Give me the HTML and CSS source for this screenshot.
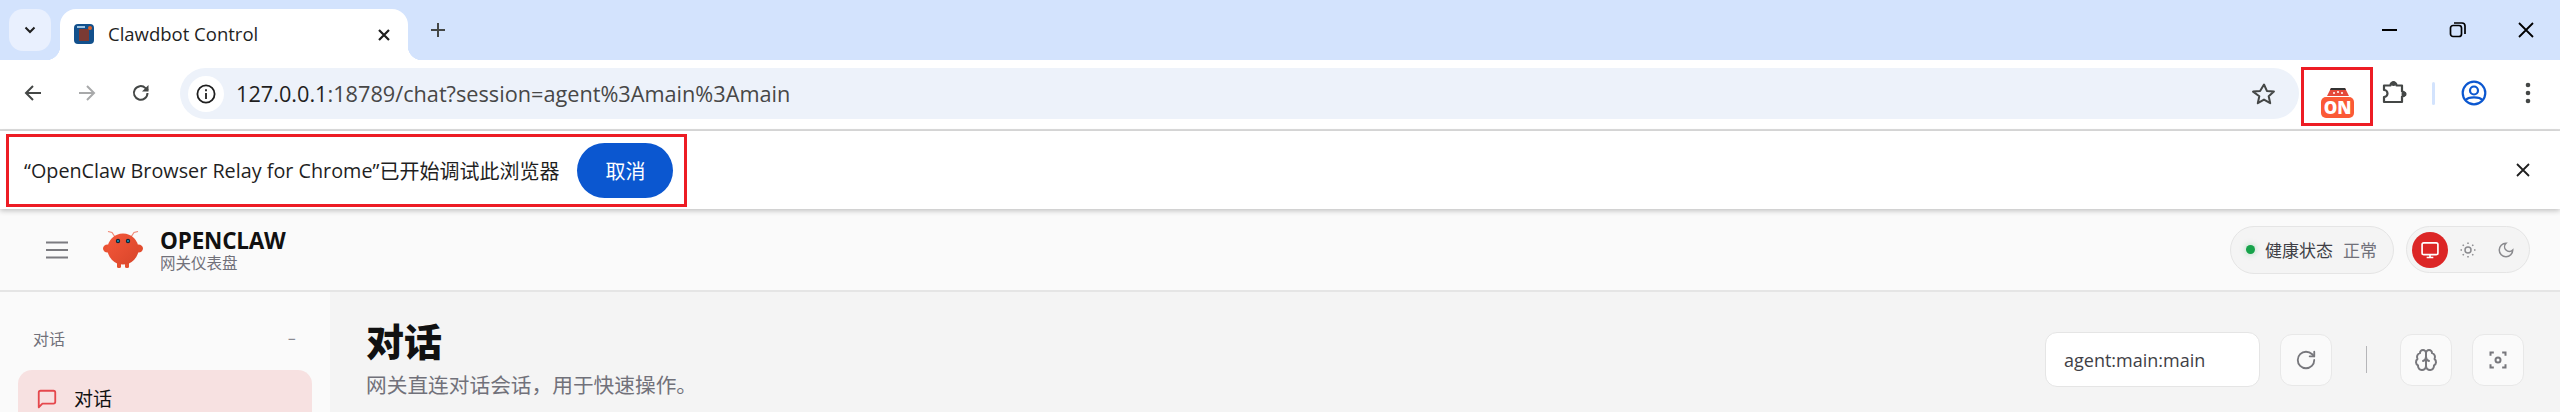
FILE: index.html
```html
<!DOCTYPE html>
<html lang="zh">
<head>
<meta charset="utf-8">
<title>Clawdbot Control</title>
<link rel="stylesheet" href="styles.css">
</head>
<body>
<div class="tabstrip">
  <button class="tabsearch"><svg width="14" height="14" viewBox="0 0 14 14"><path d="M2.500 4.500 7 9l4.500-4.500" fill="none" stroke="#1f1f1f" stroke-width="2"/></svg></button>
  <div class="tab">
    <svg class="favicon" width="20" height="20" viewBox="0 0 20 20"><rect width="20" height="20" rx="4" fill="#12508c"/><rect x="5" y="5" width="10" height="12" fill="#7a3a34"/><rect x="3" y="2" width="8" height="2" fill="#9cc4e4"/><circle cx="16" cy="4" r="2" fill="#d9622b"/></svg>
    <span class="tabtitle">Clawdbot Control</span>
    <svg class="tabclose" width="14" height="14" viewBox="0 0 14 14"><path d="M2 2l10 10M12 2 2 12" stroke="#1f1f1f" stroke-width="2.200"/></svg>
  </div>
  <svg class="newtab" width="18" height="18" viewBox="0 0 18 18"><path d="M9 2v14M2 9h14" stroke="#444746" stroke-width="2"/></svg>
  <div class="winctrls">
    <svg width="18" height="18" viewBox="0 0 18 18"><path d="M1 9h15" stroke="#000" stroke-width="2"/></svg>
    <svg width="18" height="18" viewBox="0 0 18 18"><rect x="1.500" y="4.500" width="11" height="11" rx="2.500" fill="none" stroke="#000" stroke-width="1.700"/><path d="M5 2h8a3 3 0 0 1 3 3v8" fill="none" stroke="#000" stroke-width="1.700"/></svg>
    <svg width="18" height="18" viewBox="0 0 18 18"><path d="M2 2l14 14M16 2 2 16" stroke="#000" stroke-width="1.800"/></svg>
  </div>
</div>

<div class="toolbar">
  <svg class="navicon" width="22" height="22" viewBox="0 0 22 22"><path d="M19 11H4M11 4l-7 7 7 7" fill="none" stroke="#444746" stroke-width="2"/></svg>
  <svg class="navicon" width="22" height="22" viewBox="0 0 22 22"><path d="M3 11h15M11 4l7 7-7 7" fill="none" stroke="#a8a9aa" stroke-width="2"/></svg>
  <svg class="navicon" width="22" height="22" viewBox="0 0 22 22"><path d="M17.500 11a6.800 6.800 0 1 1-2-4.900L18 8.500" fill="none" stroke="#444746" stroke-width="2"/><path d="M18.500 3v6.500H12z" fill="#444746"/></svg>
  <div class="omnibox">
    <span class="infochip"><svg width="20" height="20" viewBox="0 0 20 20"><circle cx="10" cy="10" r="8.600" fill="none" stroke="#1f1f1f" stroke-width="1.800"/><path d="M10 9v6M10 5.200v2" stroke="#1f1f1f" stroke-width="1.800"/></svg></span>
    <span class="url">127.0.0.1<span class="urlrest">:18789/chat?session=agent%3Amain%3Amain</span></span>
    <svg class="star" width="24" height="24" viewBox="0 0 24 24"><path d="M12 2.500l2.900 6.400 7 .7-5.200 4.700 1.500 6.900-6.200-3.600-6.200 3.600 1.500-6.900L1.100 9.600l7-.7z" fill="none" stroke="#444746" stroke-width="2" stroke-linejoin="round"/></svg>
  </div>
  <div class="extslot">
    <svg width="34" height="32" viewBox="0 0 34 32"><path d="M6 9 10 1h14l4 8z" fill="#e5493a"/><path d="M10 1h14l1 2H9z" fill="#333"/><circle cx="13" cy="6" r="1" fill="#fff"/><circle cx="17" cy="5" r="1" fill="#fff"/><circle cx="21" cy="6" r="1" fill="#fff"/><rect x="0" y="10" width="33" height="21" rx="5" fill="#fb5a36"/><text x="16.500" y="27" class="ontext" text-anchor="middle">ON</text></svg>
  </div>
  <svg class="puzzle" width="26" height="26" viewBox="0 0 26 26"><path d="M3 5.500h6.500a3 3 0 0 1 6 0H21v6a2.500 2.500 0 0 1 0 5v5.500H3v-5a3.500 3.500 0 0 0 0-7z" fill="none" stroke="#444746" stroke-width="2.200" stroke-linejoin="round"/><circle cx="12.500" cy="3.500" r="2.500" fill="#444746"/><circle cx="23" cy="14" r="2.500" fill="#444746"/></svg>
  <span class="tooldivider"></span>
  <svg class="profile" width="26" height="26" viewBox="0 0 26 26"><circle cx="13" cy="13" r="11.300" fill="none" stroke="#0b57d0" stroke-width="2.200"/><circle cx="13" cy="10.500" r="4" fill="none" stroke="#0b57d0" stroke-width="2.200"/><path d="M5 20c2-3.500 14-3.500 16 0" fill="none" stroke="#0b57d0" stroke-width="2.200"/></svg>
  <svg class="menu" width="6" height="22" viewBox="0 0 6 22"><circle cx="3" cy="3" r="2.300" fill="#444746"/><circle cx="3" cy="11" r="2.300" fill="#444746"/><circle cx="3" cy="19" r="2.300" fill="#444746"/></svg>
  <span class="mark mark-ext"></span>
</div>

<div class="infobar">
  <span class="infotext">“OpenClaw Browser Relay for Chrome”</span><span class="infocjk">已开始调试此浏览器</span>
  <button class="cancel">取消</button>
  <svg class="infoclose" width="14" height="14" viewBox="0 0 14 14"><path d="M1 1l12 12M13 1 1 13" stroke="#1f1f1f" stroke-width="1.800"/></svg>
  <span class="mark mark-info"></span>
</div>

<header class="apphead">
  <svg class="hamburger" width="22" height="18" viewBox="0 0 22 18"><path d="M0 1.500h22M0 9h22M0 16.500h22" stroke="#7b7b80" stroke-width="2"/></svg>
  <svg class="logo" width="40" height="37" viewBox="0 0 40 37">
    <defs><linearGradient id="lg" x1="0" y1="0" x2="1" y2="1"><stop offset="0" stop-color="#f5583a"/><stop offset="1" stop-color="#d8452a"/></linearGradient></defs>
    <path d="M12 6 9 1.500 5 .5M28 6l3-4.500 4-1" fill="none" stroke="#f08a78" stroke-width="1.200"/>
    <rect x="14" y="30" width="4" height="7" rx="1.500" fill="#e5502f"/><rect x="22" y="30" width="4" height="7" rx="1.500" fill="#e5502f"/>
    <ellipse cx="4.500" cy="17.500" rx="4.500" ry="4" fill="#ea5233"/><ellipse cx="35.500" cy="17.500" rx="4.500" ry="4" fill="#e24c2e"/>
    <circle cx="20" cy="18" r="15.500" fill="url(#lg)"/>
    <circle cx="15" cy="10" r="2.200" fill="#10263a"/><circle cx="25" cy="10" r="2.200" fill="#10263a"/>
    <circle cx="15" cy="10" r=".9" fill="#1aa7c9"/><circle cx="25" cy="10" r=".9" fill="#1aa7c9"/>
  </svg>
  <div class="brand">
    <div class="brandname">OPENCLAW</div>
    <div class="brandsub">网关仪表盘</div>
  </div>
  <div class="healthpill"><span class="dot"></span><span class="healthlabel">健康状态</span><span class="healthval">正常</span></div>
  <div class="themepill">
    <span class="themebtn active"><svg width="20" height="20" viewBox="0 0 24 24" fill="none" stroke="#fff" stroke-width="2"><rect x="2.500" y="3.500" width="19" height="14" rx="2"/><path d="M8 21h8M12 17.500V21"/></svg></span>
    <span class="themebtn"><svg width="18" height="18" viewBox="0 0 24 24" fill="none" stroke="#8a8a8e" stroke-width="2"><circle cx="12" cy="12" r="4"/><path d="M12 2v2M12 20v2M4.900 4.900l1.500 1.500M17.600 17.600l1.500 1.500M2 12h2M20 12h2M4.900 19.100l1.500-1.500M17.600 6.400l1.500-1.500"/></svg></span>
    <span class="themebtn"><svg width="18" height="18" viewBox="0 0 24 24" fill="none" stroke="#8a8a8e" stroke-width="2"><path d="M12 3a6 6 0 0 0 9 9 9 9 0 1 1-9-9z"/></svg></span>
  </div>
</header>

<div class="appbody">
  <aside class="sidebar">
    <div class="navgroup"><span>对话</span><span class="collapse">−</span></div>
    <div class="navitem">
      <svg width="22" height="22" viewBox="0 0 24 24" fill="none" stroke="#e5484d" stroke-width="2" stroke-linejoin="round"><path d="M21 15a2 2 0 0 1-2 2H7l-4 4V5a2 2 0 0 1 2-2h14a2 2 0 0 1 2 2z"/></svg>
      <span>对话</span>
    </div>
  </aside>
  <main class="content">
    <div class="pagehead">
      <div class="pagetitle">
        <h1>对话</h1>
        <p>网关直连对话会话&#xFF0C;用于快速操作。</p>
      </div>
      <div class="pagetools">
        <div class="sessioninput">agent:main:main</div>
        <span class="iconbtn"><svg width="22" height="22" viewBox="0 0 24 24" fill="none" stroke="#77777c" stroke-width="2" stroke-linecap="round" stroke-linejoin="round"><path d="M21 12a9 9 0 1 1-9-9c2.520 0 4.930 1 6.740 2.740L21 8"/><path d="M21 3v5h-5"/></svg></span>
        <span class="vsep"></span>
        <span class="iconbtn"><svg width="24" height="24" viewBox="0 0 24 24" fill="none" stroke="#77777c" stroke-width="2" stroke-linecap="round" stroke-linejoin="round"><path d="M12 5a3 3 0 1 0-5.997.125 4 4 0 0 0-2.526 5.770 4 4 0 0 0 .556 6.588A4 4 0 1 0 12 18Z"/><path d="M12 5a3 3 0 1 1 5.997.125 4 4 0 0 1 2.526 5.770 4 4 0 0 1-.556 6.588A4 4 0 1 1 12 18Z"/><path d="M15 13a4.500 4.500 0 0 1-3-4 4.500 4.500 0 0 1-3 4"/></svg></span>
        <span class="iconbtn"><svg width="20" height="20" viewBox="0 0 24 24" fill="none" stroke="#77777c" stroke-width="2.400"><path d="M3 7V3h4M17 3h4v4M21 17v4h-4M7 21H3v-4"/><circle cx="12" cy="12" r="3"/></svg></span>
      </div>
    </div>
  </main>
</div>
</body>
</html>
```

FILE: styles.css
```css
* { box-sizing: border-box; }
html, body { margin: 0; padding: 0; }
body {
  width: 2560px;
  height: 414px;
  overflow: hidden;
  background: #fff;
  font-family: "Open Sans", "Noto Sans CJK SC", sans-serif;
  color: #1f1f1f;
}
svg { display: block; flex: none; }

/* Browser tab strip */
.tabstrip {
  height: 60px;
  background: #d3e3fd;
  display: flex;
  align-items: flex-start;
  padding: 9px 0 0 9px;
}
.tabsearch {
  width: 42px;
  height: 42px;
  border: 0;
  padding: 0;
  border-radius: 14px;
  background: #e9f0fe;
  display: flex;
  align-items: center;
  justify-content: center;
}
.tab {
  position: relative;
  z-index: 1;
  width: 348px;
  height: 51px;
  margin-left: 9px;
  background: #fff;
  border-radius: 16px 16px 0 0;
  display: flex;
  align-items: center;
  padding: 0 17px 0 14px;
}
.tab::before, .tab::after {
  content: "";
  position: absolute;
  bottom: 0;
  width: 14px;
  height: 14px;
}
.tab::before { left: -14px; background: radial-gradient(circle at 0 0, transparent 14px, #fff 14.500px); }
.tab::after { right: -14px; background: radial-gradient(circle at 100% 0, transparent 14px, #fff 14.500px); }
.favicon { margin-top: -1px; }
.tabtitle { margin-left: 14px; font-size: 18.500px; flex: 1; white-space: nowrap; margin-top: -3px; }
.newtab { margin: 12px 0 0 21px; }
.winctrls {
  margin-left: auto;
  margin-top: 12px;
  width: 154px;
  margin-right: 25px;
  display: flex;
  justify-content: space-between;
}

/* Browser toolbar */
.toolbar {
  position: relative;
  height: 71px;
  background: #fff;
  border-radius: 16px 16px 0 0;
  border-bottom: 2px solid #dcdcdc;
  display: flex;
  align-items: center;
  padding: 0 0 3px 22px;
}
.navicon { margin-right: 32px; }
.navicon:nth-child(3) { margin-right: 28px; }
.omnibox {
  width: 2119px;
  height: 51px;
  margin-top: 1px;
  border-radius: 26px;
  background: #edf2fa;
  display: flex;
  align-items: center;
  padding: 0 23px 0 8px;
}
.infochip {
  width: 36px;
  height: 36px;
  border-radius: 50%;
  background: #fff;
  display: flex;
  align-items: center;
  justify-content: center;
}
.url { margin-left: 12px; font-size: 21.700px; color: #1f1f1f; white-space: nowrap; }
.urlrest { color: #474747; }
.star { margin-left: auto; }
.extslot { width: 72px; display: flex; justify-content: center; padding-top: 20px; margin-left: 2px; padding-left: 2px; }
.ontext { font: 800 17px "Open Sans", sans-serif; fill: #fff; }
.puzzle { margin-left: 8px; }
.tooldivider { width: 3px; height: 23px; margin-left: 25px; background: #d3e3fd; border-radius: 2px; }
.profile { margin-left: 26px; }
.menu { margin-left: 38px; }

/* Red annotation rectangles drawn over the screenshot */
.mark { position: absolute; border: 3px solid #ed1c24; pointer-events: none; }
.mark-ext { left: 2301px; top: 7px; width: 72px; height: 59px; }
.mark-info { left: 6px; top: 3px; width: 681px; height: 73px; }

/* Infobar */
.infobar {
  position: relative;
  z-index: 2;
  height: 78px;
  background: #fff;
  box-shadow: 0 2px 5px rgba(0, 0, 0, .22);
  display: flex;
  align-items: center;
  padding: 0 30px 0 24px;
}
.infotext { font-size: 19.800px; white-space: nowrap; }
.infocjk { font-size: 20px; white-space: nowrap; }
.cancel {
  width: 96px;
  height: 55px;
  margin-left: 18px;
  border: 0;
  border-radius: 28px;
  background: #0b57d0;
  color: #fff;
  font: 20px "Noto Sans CJK SC", sans-serif;
}
.infoclose { margin-left: auto; }

/* App header */
.apphead {
  height: 83px;
  background: #fafafa;
  border-bottom: 2px solid #e5e5e5;
  display: flex;
  align-items: center;
  padding: 0 30px 0 46px;
}
.logo { margin-left: 35px; }
.brand { margin-left: 17px; line-height: 1; padding-top: 3px; }
.brandname { font-size: 22.500px; font-weight: 700; color: #111; letter-spacing: -.2px; }
.brandsub { font-size: 15.500px; line-height: 17px; margin-top: 3px; color: #71717a; }
.healthpill {
  margin-left: auto;
  width: 164px;
  height: 48px;
  border-radius: 24px;
  background: #f4f4f4;
  border: 1px solid #e5e5e5;
  display: flex;
  align-items: center;
  padding-left: 15px;
  font-size: 17px;
  white-space: nowrap;
}
.dot {
  width: 9px;
  height: 9px;
  border-radius: 50%;
  background: #16a34a;
  box-shadow: 0 0 6px rgba(22, 163, 74, .35);
}
.healthlabel { margin-left: 10px; color: #3f3f46; }
.healthval { margin-left: 10px; color: #71717a; }
.themepill {
  margin-left: 12px;
  width: 124px;
  height: 47px;
  border-radius: 24px;
  background: #f4f4f4;
  border: 1px solid #e5e5e5;
  display: flex;
  align-items: center;
  padding-left: 5px;
}
.themebtn {
  width: 36px;
  height: 36px;
  margin-right: 2px;
  border-radius: 50%;
  display: flex;
  align-items: center;
  justify-content: center;
}
.themebtn.active { background: #dc2626; }

/* App body */
.appbody { display: flex; height: 120px; overflow: hidden; }
.sidebar {
  width: 330px;
  background: #fafafa;
  padding: 36px 18px 0;
}
.navgroup {
  display: flex;
  justify-content: space-between;
  padding: 0 16px 0 15px;
  font-size: 16px;
  line-height: 22px;
  color: #71717a;
}
.collapse { font-size: 14px; }
.navitem {
  height: 60px;
  margin-top: 20px;
  border-radius: 14px;
  background: #f7e1e1;
  display: flex;
  align-items: flex-start;
  gap: 16px;
  padding: 18px 0 0 18px;
  font-size: 19px;
  line-height: 22px;
  color: #111;
}
.content { flex: 1; background: #f4f4f4; padding: 26px 36px 0 36px; }
.pagehead { display: flex; justify-content: space-between; align-items: flex-start; }
.pagetitle h1 { margin: 0; font-size: 38px; line-height: 46px; font-weight: 900; color: #111; }
.pagetitle p { margin: 7px 0 0; font-size: 20.700px; line-height: 28px; color: #71717a; }
.pagetools { display: flex; align-items: center; margin-top: 14px; }
.sessioninput {
  width: 215px;
  height: 55px;
  border-radius: 12px;
  background: #fff;
  border: 1px solid #e5e5e5;
  display: flex;
  align-items: center;
  padding-left: 18px;
  font-size: 18px;
  color: #3f3f46;
}
.iconbtn {
  width: 52px;
  height: 52px;
  margin-left: 20px;
  border-radius: 12px;
  background: #fafafa;
  border: 1px solid #e8e8e8;
  display: flex;
  align-items: center;
  justify-content: center;
}
.vsep { width: 1px; height: 27px; margin: 0 0 0 34px; background: #b5b5b8; }
.vsep + .iconbtn { margin-left: 33px; }
```
